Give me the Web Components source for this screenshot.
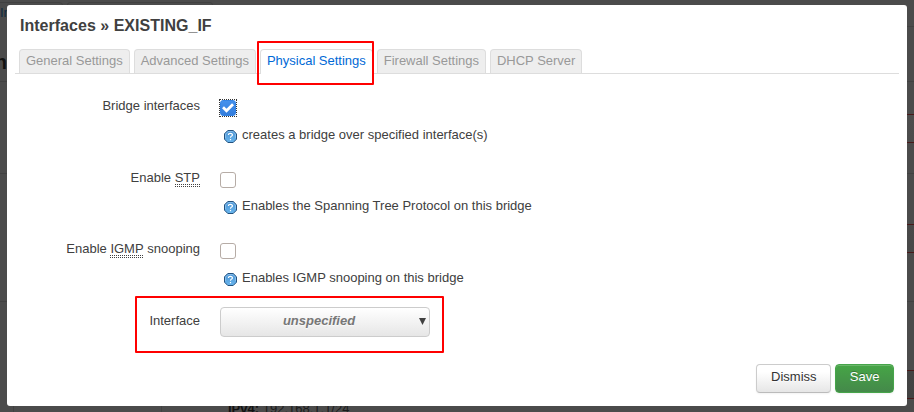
<!DOCTYPE html>
<html lang="en">
<head>
<meta charset="utf-8">
<title>Interfaces</title>
<style>
html,body{margin:0;width:914px;height:412px;overflow:hidden;background:#4b4b4b}
body{font:13px/18px "Liberation Sans",Arial,sans-serif;color:#404040;position:relative}
</style>
</head>
<body>
<page-backdrop></page-backdrop>
<modal-dialog>
  <span slot="title">Interfaces » EXISTING_IF</span>
  <tab-bar slot="tabs">
    <tab-item>General Settings</tab-item>
    <tab-item>Advanced Settings</tab-item>
    <tab-item active>Physical Settings</tab-item>
    <tab-item>Firewall Settings</tab-item>
    <tab-item>DHCP Server</tab-item>
  </tab-bar>
  <form-row><span slot="label">Bridge interfaces</span><check-box checked></check-box><help-text slot="help">creates a bridge over specified interface(s)</help-text></form-row>
  <form-row><span slot="label">Enable <abbr-term>STP</abbr-term></span><check-box></check-box><help-text slot="help">Enables the Spanning Tree Protocol on this bridge</help-text></form-row>
  <form-row><span slot="label">Enable <abbr-term>IGMP</abbr-term> snooping</span><check-box></check-box><help-text slot="help">Enables IGMP snooping on this bridge</help-text></form-row>
  <form-row compact><span slot="label">Interface</span><drop-down>unspecified</drop-down></form-row>
  <push-button slot="actions">Dismiss</push-button>
  <push-button slot="actions" kind="save">Save</push-button>
</modal-dialog>
<mark-box style="left:257px;top:41px;width:117px;height:44px"></mark-box>
<mark-box style="left:135px;top:296px;width:309px;height:57px"></mark-box>
<script>
const define = (name, html) => {
  const t = document.createElement('template');
  t.innerHTML = html;
  customElements.define(name, class extends HTMLElement {
    constructor() {
      super();
      this.attachShadow({mode: 'open'}).append(t.content.cloneNode(true));
    }
  });
};
define('page-backdrop', `<style>
:host{position:absolute;inset:0;overflow:hidden;display:block;color:#1c1c1c}
svg{position:absolute;inset:0}
span{position:absolute;white-space:nowrap}
b,.head{color:#121212}
.link{left:0;top:4px;color:#0e2a40}
.head{right:907px;top:50px;font:bold 19.5px/24px "Liberation Sans",sans-serif}
.ip{left:228px;top:400px}
</style>
<svg width="914" height="412" fill="none">
<defs><linearGradient id="g" x2="0" y2="1"><stop stop-color="#4d4d4d"/><stop offset="1" stop-color="#424242"/></linearGradient></defs>
<path d="M0 2.500H59Q62.500 2.500 62.500 5M67.500 5Q67.500 2.500 70 2.500H210Q212.500 2.500 212.500 5" stroke="#414141"/>
<path d="M0 81.500H7M0 173.500H7M0 301.500H7M907 26.500H914M907 81.500H914M907 173.500H914M907 301.500H914M13.500 406V412M161.500 406V412" stroke="#414141"/>
<path d="M907 115h7v27h-7zM907 225h7v27h-7zM907 371h7v27h-7z" fill="url(#g)"/>
<path d="M907 114.500h7M907 142.500h7M907 224.500h7M907 252.500h7M907 370.500h7M907 398.500h7" stroke="#481919"/>
</svg>
<span class="link">In</span><span class="head">n</span><span class="ip"><b>IPv4:</b> 192.168.1.1/24</span>`);
define('modal-dialog', `<style>
:host{position:relative;box-sizing:border-box;display:flex;flex-direction:column;width:900px;height:401px;margin:5px 7px 0;padding:8px;background:#fff;border-radius:3px}
h4{margin:0;padding:1px 5px 0;box-sizing:border-box;flex:none;font-size:16px;line-height:24px;height:36px;letter-spacing:.02px}
.fields{display:flex;flex-direction:column;flex:none;padding-top:21px}
footer{display:flex;flex:none;justify-content:flex-end;gap:4px;margin-top:auto;padding:0 5px 5px 0}
</style>
<h4><slot name="title"></slot></h4><slot name="tabs"></slot><div class="fields"><slot></slot></div><footer><slot name="actions"></slot></footer>`);
define('tab-bar', `<style>:host{display:flex;flex:none;gap:4px;height:24px;padding:0 4px;border-bottom:1px solid #ddd}</style><slot></slot>`);
define('tab-item', `<style>
:host{display:block;box-sizing:border-box;height:24px;padding:0 6px;line-height:22px;border:1px solid #ddd;border-bottom:0;border-radius:4px 4px 0 0;background:#eee;color:#999;white-space:nowrap;letter-spacing:-.01px}
:host([active]){height:25px;background:#fff;color:#0069d6}
</style><slot></slot>`);
define('form-row', `<style>
:host{display:grid;grid-template-columns:185px 1fr;column-gap:20px;height:71.500px}
:host([compact]){height:34px}
.label{text-align:right;padding-top:2px;white-space:nowrap}
.field{display:flex;flex-direction:column}
</style><div class="label"><slot name="label"></slot></div><div class="field"><slot></slot><slot name="help"></slot></div>`);
define('abbr-term', `<style>:host{display:inline-block;line-height:15px;height:15px;padding-bottom:2px;margin-bottom:-3px;box-sizing:content-box;background:repeating-linear-gradient(90deg,#404040 0 1px,transparent 1px 2px) 0 100%/100% 1px no-repeat,repeating-linear-gradient(90deg,#404040 0 1px,transparent 1px 2px) 0 calc(100% - 2px)/100% 1px no-repeat}</style><slot></slot>`);
define('check-box', `<style>
:host{display:block;box-sizing:border-box;width:16px;height:16px;margin-top:5px;border:1px solid #b6aca6;border-radius:3px;background:#fff}
:host([checked]){border-color:#3584e4;background:linear-gradient(#4490ec,#327ddd)}
:host([checked])::after{content:"";display:block;position:relative;width:16px;height:16px;margin:-16px 0 0 -2px;border:1px dotted #333}
svg{display:none}
:host([checked]) svg{display:block}
</style><svg width="14" height="14" viewBox="0 0 14 14" fill="none" stroke="#fff" stroke-width="2.800"><path d="M2 6.300L5.500 9.700L12 3.300"/></svg>`);
define('help-text', `<style>
:host{display:flex;align-items:flex-start;gap:5px;margin-top:9.900px;padding-left:4px;white-space:nowrap}
svg{margin-top:4px;flex:none}
</style><svg width="13" height="13" viewBox="0 0 13 13"><defs><linearGradient id="b" x2="0" y2="1"><stop stop-color="#4c94d4"/><stop offset="1" stop-color="#68b5ed"/></linearGradient></defs>
<path d="M3.800.5h5.400l3.300 3.300v5.400l-3.300 3.300H3.800L.5 9.200V3.800z" fill="url(#b)" stroke="#24527f"/>
<path d="M1.500 8V4.200L4.200 1.500h4.600l2.700 2.700V8" fill="none" stroke="#91c4ee" stroke-width=".8"/>
<path d="M4.500 5V4.300Q4.500 3.300 6.400 3.300T8.500 4.800Q8.500 5.800 7.300 6.200Q6.500 6.500 6.500 7.700" fill="none" stroke="#fff" stroke-width="1.200"/><path d="M5.900 9h1.200v1.200H5.900z" fill="#fff"/></svg><span><slot></slot></span>`);
define('drop-down', `<style>
:host{display:flex;box-sizing:border-box;width:210px;height:30px;margin-top:-3px;align-items:center;border:1px solid #ccc;border-radius:4px;background:linear-gradient(#fff,#e6e6e6);text-shadow:0 1px 1px rgba(255,255,255,.75)}
b{flex:1;text-align:center;font-style:italic;color:#777;padding:0 0 2px 1px}
svg{flex:none;margin-bottom:1px}
</style><b><slot></slot></b><svg width="13" height="12"><path d="M3 3h7L6.500 10z" fill="#404040"/></svg>`);
define('push-button', `<style>
:host{display:block;box-sizing:border-box;height:29px;padding:3px 13.600px 0;border:1px solid #ccc;border-bottom-color:#bbb;border-radius:4px;background:linear-gradient(#fff 25%,#e6e6e6);color:#333;text-shadow:0 1px 1px rgba(255,255,255,.75);box-shadow:inset 0 1px 0 rgba(255,255,255,.2),0 1px 2px rgba(0,0,0,.05)}
:host([kind]){color:#fff;background:linear-gradient(#46a546,#44894a);border-color:#46a54a;text-shadow:0 -1px 0 rgba(0,0,0,.25)}
</style><slot></slot>`);
define('mark-box', `<style>:host{position:absolute;box-sizing:border-box;border:2px solid #f00;border-radius:1px}</style>`);
</script>
</body>
</html>
